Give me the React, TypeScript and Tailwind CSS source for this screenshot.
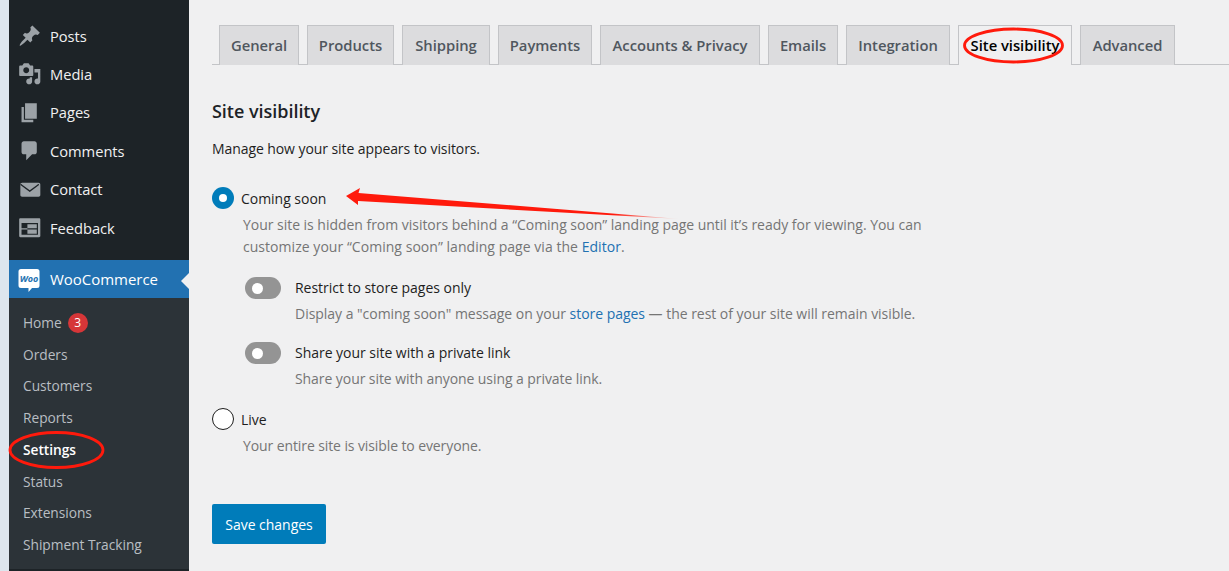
const menu = [
  { label: 'Posts', d: 'M10.44 3.02l1.82-1.82 6.36 6.35-1.83 1.82c-1.05-.68-2.48-.57-3.41.36l-.75.75c-.92.93-1.04 2.35-.35 3.41l-1.83 1.82-2.41-2.41-2.8 2.79c-.42.42-3.38 2.71-3.8 2.29s1.86-3.39 2.28-3.81l2.79-2.79L4.1 9.36l1.83-1.82c1.05.69 2.48.57 3.4-.36l.75-.75c.93-.92 1.05-2.35.36-3.41z' },
  { label: 'Media', d: 'M13 11V4c0-.55-.45-1-1-1h-1.67L9 1H5L3.67 3H2c-.55 0-1 .45-1 1v7c0 .55.45 1 1 1h10c.55 0 1-.45 1-1zM7 4.5c1.38 0 2.5 1.12 2.5 2.5S8.38 9.5 7 9.5 4.5 8.38 4.5 7 5.62 4.5 7 4.5zM14 6h5v10.5c0 1.38-1.12 2.5-2.5 2.5S14 17.88 14 16.5s1.12-2.5 2.5-2.5c.17 0 .34.02.5.05V9h-3V6zm-4 8.05V13h2v3.5c0 1.38-1.12 2.5-2.5 2.5S7 17.88 7 16.5 8.12 14 9.5 14c.17 0 .34.02.5.05z' },
  { label: 'Pages', d: 'M6 15V2h10v13H6zm-1 1h8v2H3V5h2v11z' },
  { label: 'Comments', d: 'M5 2h9c1.1 0 2 .9 2 2v7c0 1.1-.9 2-2 2h-2l-5 5v-5H5c-1.1 0-2-.9-2-2V4c0-1.1.9-2 2-2z' },
  { label: 'Contact', d: 'M19 14.5v-9c0-.83-.67-1.5-1.5-1.5H3.49c-.83 0-1.5.67-1.5 1.5v9c0 .83.67 1.5 1.5 1.5H17.5c.83 0 1.5-.67 1.5-1.5zm-1.31-9.11c.33.33.15.67-.03.84L10 12 2.34 6.23c-.18-.17-.36-.51-.03-.84s.67-.17.95.07L10 10.5l6.74-5.04c.28-.24.62-.4.95-.07z' },
  { label: 'Feedback', d: 'M2 2h16c.55 0 1 .45 1 1v14c0 .55-.45 1-1 1H2c-.55 0-1-.45-1-1V3c0-.55.45-1 1-1zm15 14V6H3v10h14zM3 10.5h5v1H3zM8 7h8v3.5H8zM8 11.5h8V15H8z' },
];

const subMenu = ['Home', 'Orders', 'Customers', 'Reports', 'Settings', 'Status', 'Extensions', 'Shipment Tracking'];

const tabs = [
  { label: 'General', w: 'w-[80px]' },
  { label: 'Products', w: 'w-[87px]' },
  { label: 'Shipping', w: 'w-[88px]' },
  { label: 'Payments', w: 'w-[94px]' },
  { label: 'Accounts & Privacy', w: 'w-[160px]' },
  { label: 'Emails', w: 'w-[70px]' },
  { label: 'Integration', w: 'w-[104px]' },
  { label: 'Site visibility', w: 'w-[114px]', active: true },
  { label: 'Advanced', w: 'w-[95px]' },
];

function Toggle() {
  return (
    <div className="flex h-[22px] w-[36px] items-center rounded-full bg-[#949494] pl-[7px]">
      <div className="h-[11px] w-[11px] rounded-full bg-white" />
    </div>
  );
}

function Sidebar() {
  return (
    <div className="flex h-[571px] w-[189px] shrink-0 border-l-[9px] border-[#dde6ee] bg-[#1d2327] text-[14.7px]">
      <div className="flex w-full flex-col pt-[16.5px]">
        {menu.map((item) => (
          <div key={item.label} className="flex h-[38.4px] items-center text-[#f0f0f1]">
            <svg viewBox="0 0 20 20" className="ml-[9px] h-[23.5px] w-[23.5px] fill-[#9ca2a7]">
              <path d={item.d} />
            </svg>
            <span className="ml-[8.5px]">{item.label}</span>
          </div>
        ))}
        <div className="mt-[13.5px] flex h-[38px] items-center bg-[#2271b1] text-[15px] text-white relative">
          <svg viewBox="0 0 22 24" className="ml-[9px] mt-[2px] h-[24px] w-[22px]">
            <path d="M3 1h16a2.5 2.5 0 0 1 2.5 2.5v14A2.5 2.5 0 0 1 19 20h-5l-3.5 4v-4H3a2.5 2.5 0 0 1-2.5-2.5v-14A2.5 2.5 0 0 1 3 1z" fill="#fff" />
            <text x="11" y="14" textAnchor="middle" fontSize="9" fontWeight="700" fontStyle="italic" fill="#2271b1" fontFamily="'Open Sans', sans-serif">Woo</text>
          </svg>
          <span className="ml-[10px]">WooCommerce</span>
          <div className="absolute right-0 top-[13px] h-0 w-0 border-y-[8px] border-r-[8px] border-y-transparent border-r-[#f0f0f1]" />
        </div>
        <div className="flex h-[271px] flex-col bg-[#2c3338] pt-[9px] text-[13.75px] text-[#b9bec3]">
          {subMenu.map((item) => (
            <div key={item} className={`flex h-[31.75px] items-center pl-[14px] ${item === 'Settings' ? 'font-semibold text-white' : ''}`}>
              {item}
              {item === 'Home' && (
                <span className="ml-[6px] flex h-[20px] w-[20px] items-center justify-center rounded-full bg-[#d63638] text-[12px] text-white">3</span>
              )}
            </div>
          ))}
        </div>
      </div>
    </div>
  );
}

export default function App() {
  return (
    <div className="relative flex h-[571px] w-[1229px] overflow-hidden bg-[#f0f0f1] font-['Open_Sans',sans-serif] text-[14px] tracking-[-0.03px] text-[#1e1e1e]">
      <Sidebar />
      <div className="flex-1 pl-[23px] pt-[25px]">
        <div className="flex h-[40px] gap-[8px] border-b border-[#c3c4c7] pl-[7px]">
          {tabs.map((tab) => (
            <div
              key={tab.label}
              className={`flex h-[40px] items-center justify-center border border-b-0 border-[#c3c4c7] text-[14.8px] font-semibold ${tab.w} ${tab.active ? 'bg-[#f0f0f1] text-black' : 'bg-[#dcdcde] text-[#50575e]'}`}
            >
              {tab.label}
            </div>
          ))}
        </div>
        <h2 className="mt-[34px] text-[18px] leading-[24px] font-semibold text-[#1d2327]">Site visibility</h2>
        <p className="mt-[16px] leading-[20px] tracking-[-0.08px]">Manage how your site appears to visitors.</p>

        <div className="mt-[28px] flex h-[22px] items-center gap-[7px]">
          <div className="flex h-[22px] w-[22px] items-center justify-center rounded-full bg-[#007cba]">
            <div className="h-[8px] w-[8px] rounded-full bg-white" />
          </div>
          <span>Coming soon</span>
        </div>
        <div className="mt-[5px] pl-[31px] leading-[22px] text-[#757575]">
          <div>Your site is hidden from visitors behind a “Coming soon” landing page until it’s ready for viewing. You can</div>
          <div className="tracking-[0.04px]">customize your “Coming soon” landing page via the <span className="text-[#2271b1]">Editor</span>.</div>
        </div>

        <div className="mt-[19px] flex gap-[14px] pl-[33px]">
          <Toggle />
          <div>
            <div className="leading-[22px]">Restrict to store pages only</div>
            <div className="mt-[4px] leading-[22px] text-[#757575]">
              Display a "coming soon" message on your <span className="text-[#2271b1]">store pages</span> — the rest of your site will remain visible.
            </div>
          </div>
        </div>
        <div className="mt-[17px] flex gap-[14px] pl-[33px]">
          <Toggle />
          <div>
            <div className="leading-[22px]">Share your site with a private link</div>
            <div className="mt-[4px] leading-[22px] tracking-[-0.07px] text-[#757575]">Share your site with anyone using a private link.</div>
          </div>
        </div>

        <div className="mt-[18px] flex h-[22px] items-center gap-[7px]">
          <div className="h-[22px] w-[22px] rounded-full border border-[#1e1e1e] bg-white" />
          <span>Live</span>
        </div>
        <div className="mt-[5px] pl-[31px] leading-[22px] tracking-[-0.1px] text-[#757575]">Your entire site is visible to everyone.</div>

        <button className="mt-[47px] flex h-[40px] w-[114px] items-center justify-center rounded-[2px] bg-[#007cba] text-white">Save changes</button>
      </div>

      {/* red annotations over the screenshot */}
      <svg className="pointer-events-none absolute left-0 top-0 h-[571px] w-[1229px]" viewBox="0 0 1229 571">
        <defs>
          <linearGradient id="tail" x1="345" y1="0" x2="680" y2="0" gradientUnits="userSpaceOnUse">
            <stop offset="0.8" stopColor="#ff1a0c" />
            <stop offset="1" stopColor="#ff1a0c" stopOpacity="0" />
          </linearGradient>
        </defs>
        <ellipse cx="1013.5" cy="45.5" rx="49" ry="16.5" fill="none" stroke="#ff1a0c" strokeWidth="2.8" />
        <ellipse cx="56.5" cy="450" rx="46.5" ry="17.5" fill="none" stroke="#ff1a0c" strokeWidth="2.8" />
        <path d="M346 196L360 188L358.5 193L680 219L358 201L358 205Z" fill="url(#tail)" />
      </svg>
    </div>
  );
}
